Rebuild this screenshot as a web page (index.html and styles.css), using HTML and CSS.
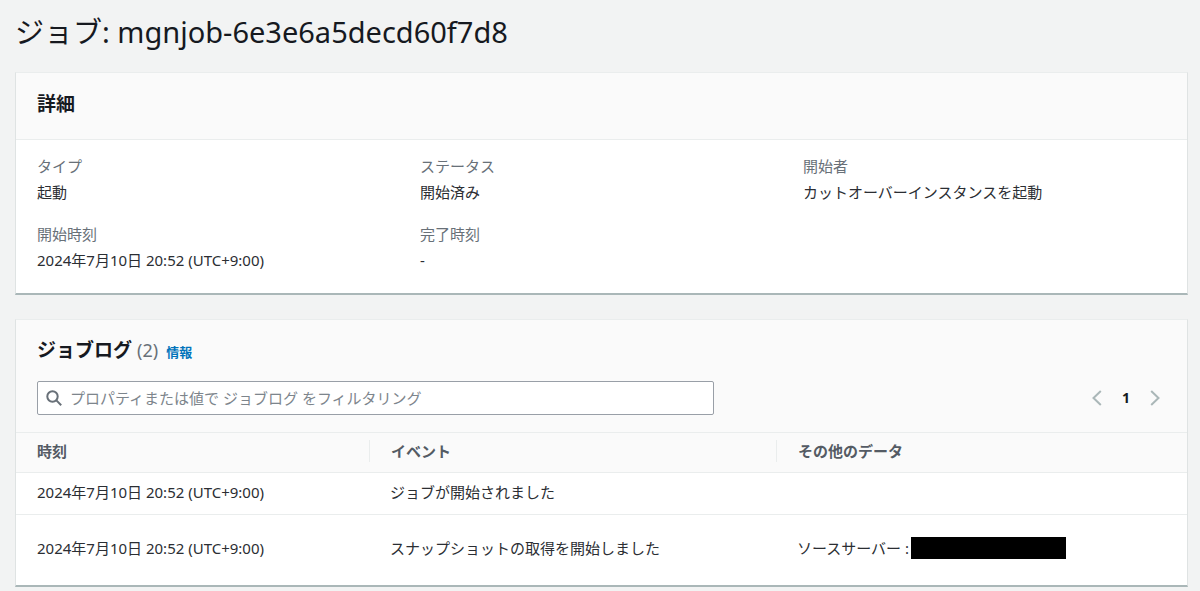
FILE: index.html
```html
<!DOCTYPE html>
<html lang="ja">
<head>
    <meta charset="UTF-8">
    <meta name="viewport" content="width=device-width, initial-scale=1.0">
    <title>ジョブ: mgnjob-6e3e6a5decd60f7d8</title>
    <link rel="stylesheet" href="styles.css">
</head>
<body>
    <main>
        <h1>ジョブ: mgnjob-6e3e6a5decd60f7d8</h1>

        <section class="panel">
            <div class="panel-header">
                <h2>詳細</h2>
            </div>
            <dl class="details">
                <div>
                    <dt>タイプ</dt>
                    <dd>起動</dd>
                </div>
                <div>
                    <dt>ステータス</dt>
                    <dd>開始済み</dd>
                </div>
                <div>
                    <dt>開始者</dt>
                    <dd>カットオーバーインスタンスを起動</dd>
                </div>
                <div>
                    <dt>開始時刻</dt>
                    <dd>2024年7月10日 20:52 (UTC+9:00)</dd>
                </div>
                <div>
                    <dt>完了時刻</dt>
                    <dd>-</dd>
                </div>
            </dl>
        </section>

        <section class="panel">
            <div class="log-header">
                <div class="log-title">
                    <h2>ジョブログ</h2>
                    <span class="count">(2)</span>
                    <a class="info" href="#">情報</a>
                </div>
                <div class="toolbar">
                    <div class="search">
                        <svg viewBox="0 0 16 16" width="16" height="16" aria-hidden="true">
                            <circle cx="6.5" cy="6.5" r="5.2"/>
                            <path d="M10.4 10.4L15.2 15.2"/>
                        </svg>
                        <input type="text" aria-label="ジョブログをフィルタリング" placeholder="プロパティまたは値で ジョブログ をフィルタリング">
                    </div>
                    <nav class="pagination">
                        <button type="button" aria-label="前へ">
                            <svg viewBox="0 0 10 16" width="10" height="16"><path d="M8.8 1L1.5 8L8.8 15"/></svg>
                        </button>
                        <button type="button" class="current">1</button>
                        <button type="button" aria-label="次へ">
                            <svg viewBox="0 0 10 16" width="10" height="16"><path d="M1.2 1L8.5 8L1.2 15"/></svg>
                        </button>
                    </nav>
                </div>
            </div>
            <table>
                <thead>
                    <tr>
                        <th class="col-time"><span>時刻</span></th>
                        <th class="col-event"><span>イベント</span></th>
                        <th><span>その他のデータ</span></th>
                    </tr>
                </thead>
                <tbody>
                    <tr>
                        <td>2024年7月10日 20:52 (UTC+9:00)</td>
                        <td>ジョブが開始されました</td>
                        <td></td>
                    </tr>
                    <tr class="tall">
                        <td>2024年7月10日 20:52 (UTC+9:00)</td>
                        <td>スナップショットの取得を開始しました</td>
                        <td><div class="source">ソースサーバー :<span class="redacted"></span></div></td>
                    </tr>
                </tbody>
            </table>
        </section>
    </main>
</body>
</html>
```

FILE: styles.css
```css
* {
    box-sizing: border-box;
}
body {
    margin: 0;
    background: #f2f3f3;
    color: #16191f;
    font-family: "Noto Sans", "Noto Sans CJK JP", sans-serif;
    font-size: 15px;
    line-height: 22px;
}
main {
    padding: 12px 12px 4px 15px;
}
h1 {
    margin: 0 0 20px;
    font-size: 29px;
    font-weight: 400;
    line-height: 40px;
}
h2 {
    margin: 0;
    font-size: 19px;
    font-weight: 700;
    line-height: 26px;
}
.panel {
    margin-bottom: 24px;
    background: #fff;
    border: 1px solid #dfe3e3;
    border-top-color: #eaeded;
    border-bottom: 2px solid #aab7b8;
}
.panel:last-child {
    margin-bottom: 0;
}
.panel-header {
    padding: 18px 21px 22px;
    background: #fafafa;
    border-bottom: 1px solid #eaeded;
}
.details {
    display: grid;
    grid-template-columns: repeat(3, 1fr);
    gap: 20px;
    margin: 0;
    padding: 15px 21px 22px;
}
.details dt {
    margin-bottom: 4px;
    color: #687078;
}
.details dd {
    margin: 0;
    color: #2b2e33;
}
.log-header {
    padding: 17px 21px;
    background: #fafafa;
}
.log-title {
    display: flex;
    align-items: baseline;
    gap: 5px;
    margin-bottom: 18px;
}
.count {
    color: #687078;
    font-size: 18px;
}
.info {
    margin-left: 3px;
    color: #0073bb;
    font-size: 13px;
    font-weight: 700;
    text-decoration: none;
}
.toolbar {
    display: flex;
    align-items: center;
    justify-content: space-between;
}
.search {
    display: flex;
    align-items: center;
    gap: 8px;
    width: 60%;
    height: 34px;
    padding: 0 8px;
    background: #fff;
    border: 1px solid #999fa7;
    border-radius: 2px;
}
.search svg {
    flex: none;
    fill: none;
    stroke: #687078;
    stroke-width: 2;
}
.search input {
    flex: 1;
    min-width: 0;
    padding: 0;
    border: 0;
    outline: none;
    background: none;
    font: inherit;
}
.search input::placeholder {
    color: #7d858c;
    opacity: 1;
}
.pagination {
    display: flex;
    align-items: center;
    gap: 20px;
    padding-right: 6px;
}
.pagination button {
    display: flex;
    padding: 0;
    border: 0;
    background: none;
    color: #16191f;
    font: inherit;
    cursor: pointer;
}
.pagination .current {
    font-size: 14px;
    font-weight: 700;
}
.pagination svg {
    fill: none;
    stroke: #aab7b8;
    stroke-width: 2;
}
table {
    width: 100%;
    border-collapse: collapse;
    table-layout: fixed;
}
th {
    padding: 7px 0 10px;
    background: #fafafa;
    border-top: 1px solid #eaeded;
    border-bottom: 1px solid #eaeded;
    color: #545b64;
    font-weight: 700;
    text-align: left;
}
th span {
    display: block;
    padding: 0 21px;
}
th + th span {
    border-left: 1px solid #eaeded;
}
.col-time {
    width: 353px;
}
.col-event {
    width: 407px;
}
td {
    height: 42px;
    padding: 0 21px 4px;
    border-bottom: 1px solid #eaeded;
    color: #2b2e33;
}
.tall td {
    height: 70px;
    border-bottom: 0;
}
.source {
    display: flex;
    align-items: center;
}
.redacted {
    width: 155px;
    height: 22px;
    margin-left: 2px;
    background: #000;
}
```
